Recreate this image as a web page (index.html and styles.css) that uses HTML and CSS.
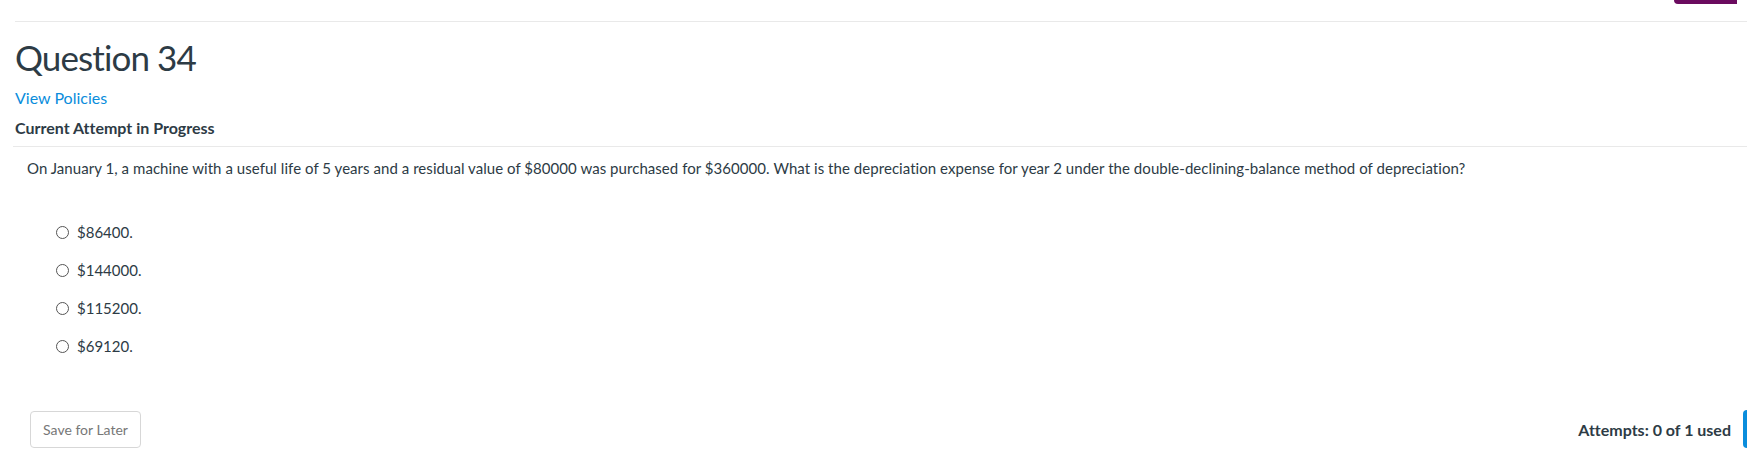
FILE: index.html
```html
<!DOCTYPE html>
<html>
<head>
<meta charset="utf-8">
<link rel="stylesheet" href="styles.css">
</head>
<body>
<div class="page">
  <div class="header"><span class="tab"></span></div>
  <h1 class="title">Question 34</h1>
  <a class="link" href="#">View Policies</a>
  <div class="status">Current Attempt in Progress</div>
  <div class="question">
    <p class="prompt">On January 1, a machine with a useful life of 5 years and a residual value of $80000 was purchased for $360000. What is the depreciation expense for year 2 under the double-declining-balance method of depreciation?</p>
    <ul class="options">
      <li class="option"><span class="radio"></span><span>$86400.</span></li>
      <li class="option"><span class="radio"></span><span>$144000.</span></li>
      <li class="option"><span class="radio"></span><span>$115200.</span></li>
      <li class="option"><span class="radio"></span><span>$69120.</span></li>
    </ul>
  </div>
  <div class="footer">
    <button class="save">Save for Later</button>
    <div class="attempts">Attempts: 0 of 1 used</div>
    <button class="submit" aria-label="Submit Answer"></button>
  </div>
</div>
</body>
</html>
```
FILE: styles.css
```css
html, body {
  margin: 0;
  padding: 0;
  background: #fff;
  overflow: hidden;
}
body {
  font-family: Lato, "Open Sans", sans-serif;
  color: #2d3b45;
  font-variant-ligatures: none;
}
.page {
  padding-left: 15px;
}
.header {
  height: 21px;
  border-bottom: 1px solid #e9e9e9;
  display: flex;
  justify-content: flex-end;
  align-items: flex-start;
}
.tab {
  width: 63px;
  height: 4px;
  background: #6b0b5f;
  border-radius: 0 0 0 4px;
  margin-right: 10px;
}
.title {
  margin: 13px 0 0;
  font-size: 35px;
  line-height: 44px;
  font-weight: 400;
  letter-spacing: -0.9px;
}
.link {
  display: block;
  margin-top: 9px;
  font-size: 16px;
  line-height: 20px;
  color: #0a8ddc;
  text-decoration: none;
}
.status {
  margin-top: 10px;
  margin-left: -2px;
  padding-left: 2px;
  padding-bottom: 8px;
  border-bottom: 1px solid #e9e9e9;
  font-size: 16px;
  line-height: 20px;
  font-weight: 700;
}
.question {
  padding: 11px 0 0 12px;
}
.prompt {
  margin: 0;
  font-size: 15px;
  line-height: 20px;
  letter-spacing: 0.05px;
}
.options {
  list-style: none;
  margin: 35px 0 0;
  padding: 0 0 0 29px;
}
.option {
  display: flex;
  align-items: center;
  gap: 8px;
  height: 38px;
  font-size: 15px;
}
.radio {
  width: 11px;
  height: 11px;
  border: 1px solid #555;
  border-radius: 50%;
  background: #fff;
}
.footer {
  display: flex;
  align-items: center;
  margin-top: 45px;
  padding-left: 15px;
}
.save {
  width: 111px;
  height: 37px;
  border: 1px solid #d7d7d7;
  border-radius: 4px;
  background: #fff;
  color: #777;
  font-family: Lato, sans-serif;
  font-size: 14px;
  padding: 0;
}
.attempts {
  margin-left: auto;
  font-size: 16px;
  font-weight: 700;
}
.submit {
  flex-shrink: 0;
  margin-left: 12px;
  margin-right: -116px;
  width: 120px;
  height: 38px;
  border: none;
  border-radius: 4px;
  background: #0a8ddc;
}
```
